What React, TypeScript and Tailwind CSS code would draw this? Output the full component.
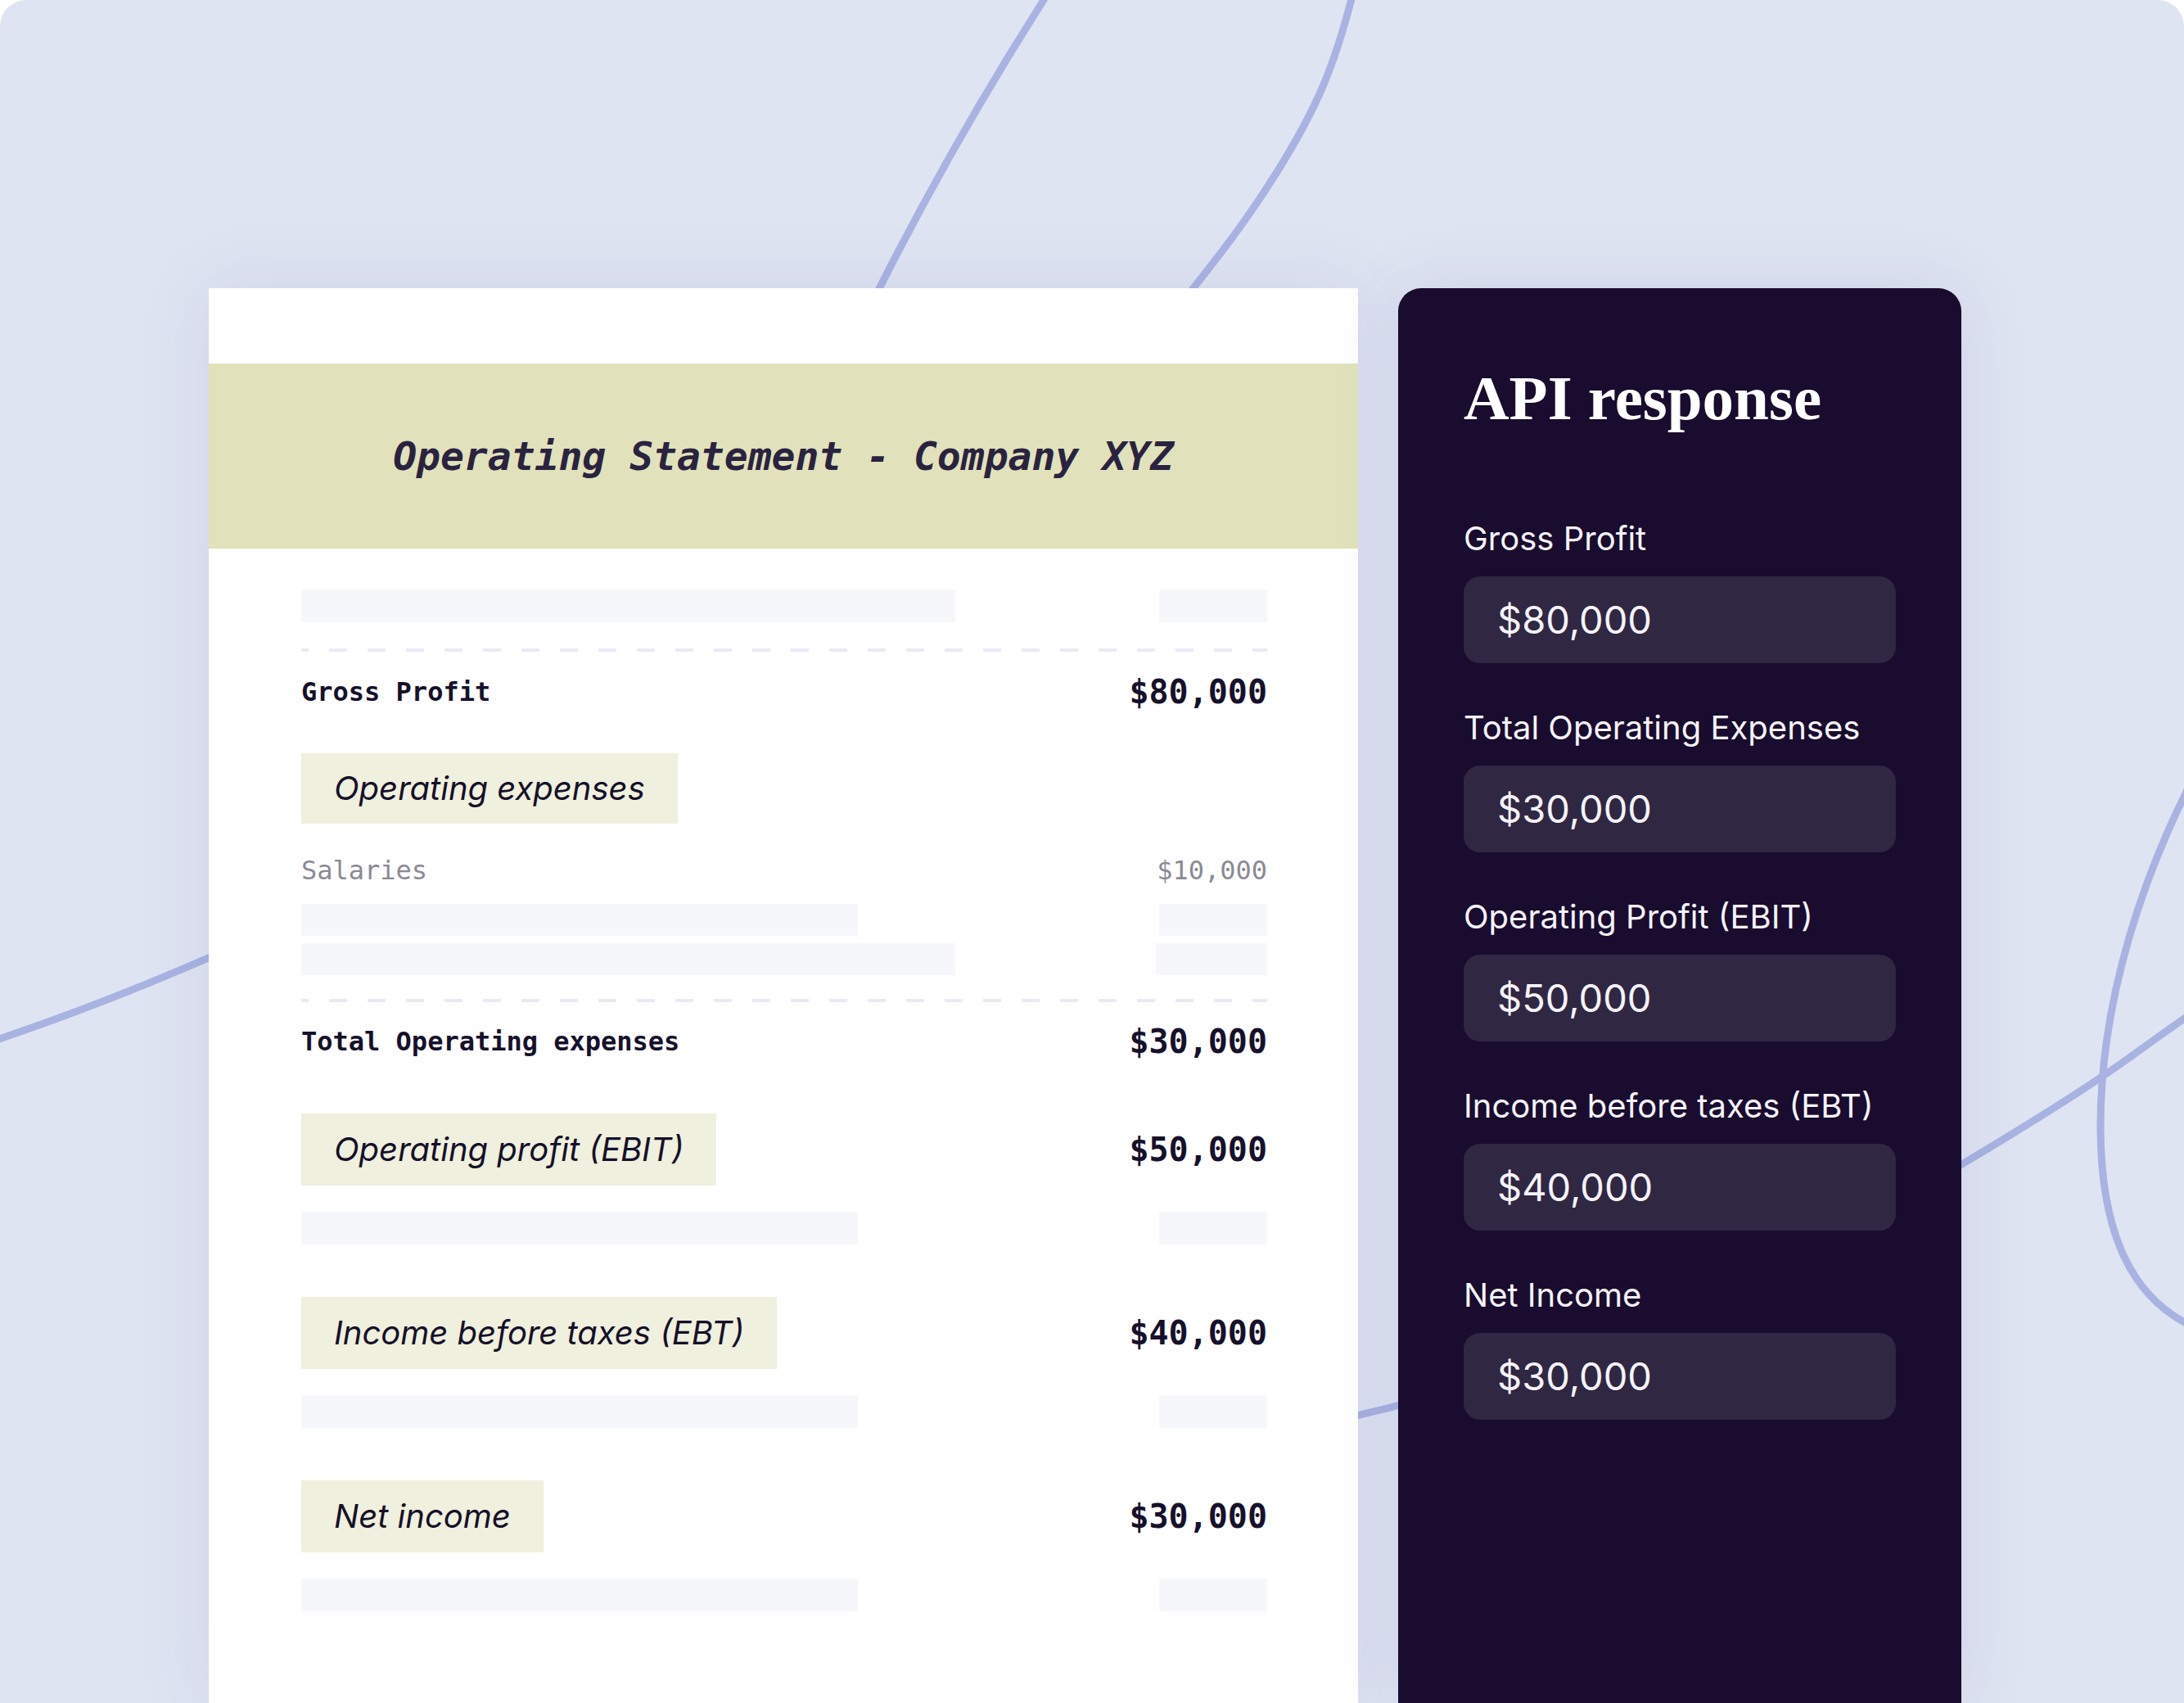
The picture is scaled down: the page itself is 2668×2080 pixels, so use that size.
import React from 'react';

const MONO = "font-['DejaVu_Sans_Mono',monospace]";
const SANS = "font-['Inter',sans-serif]";

const API_FIELDS = [
  { label: 'Gross Profit', value: '$80,000' },
  { label: 'Total Operating Expenses', value: '$30,000' },
  { label: 'Operating Profit (EBIT)', value: '$50,000' },
  { label: 'Income before taxes (EBT)', value: '$40,000' },
  { label: 'Net Income', value: '$30,000' },
];

function Placeholder({ left, right, className = '' }: { left: string; right: string; className?: string }) {
  return (
    <div className={`flex justify-between h-[40px] ${className}`}>
      <div className={`h-full bg-[#f6f7fb] ${left}`} />
      <div className={`h-full bg-[#f6f7fb] ${right}`} />
    </div>
  );
}

function Dashed({ className = '' }: { className?: string }) {
  return (
    <div
      className={`h-[4px] bg-[repeating-linear-gradient(to_right,#eaeaf6_0_9px,transparent_9px_34px,#eaeaf6_34px_47px)] ${className}`}
    />
  );
}

function TotalRow({ label, value, className = '' }: { label: string; value: string; className?: string }) {
  return (
    <div className={`flex items-center justify-between h-[50px] text-[#16112b] ${MONO} ${className}`}>
      <span className="text-[32px] font-bold">{label}</span>
      <span className="text-[40px] font-bold">{value}</span>
    </div>
  );
}

function Chip({ children }: { children: React.ReactNode }) {
  return (
    <div className={`h-full flex items-center px-[40px] bg-[#eff0dd] text-[40px] italic text-[#16102a] ${SANS}`}>
      {children}
    </div>
  );
}

function ChipRow({ label, value, className = '' }: { label: string; value?: string; className?: string }) {
  return (
    <div className={`flex items-center justify-between h-[88px] ${className}`}>
      <Chip>{label}</Chip>
      {value && <span className={`text-[40px] font-bold text-[#16112b] ${MONO}`}>{value}</span>}
    </div>
  );
}

function Statement() {
  return (
    <div className="relative z-10 w-[1404px] shrink-0 bg-white pt-[92px] shadow-[0_0_80px_rgba(70,80,160,0.10)]">
      {/* Title band */}
      <div className="h-[226px] bg-[#e1e2bb] flex items-center justify-center">
        <h1 className={`text-[48px] font-bold italic text-[#2a2340] ${MONO}`}>
          Operating Statement - Company XYZ
        </h1>
      </div>

      <div className="pl-[113px] pr-[111px] flex flex-col">
        <Placeholder left="w-[799px]" right="w-[132px]" className="mt-[50px]" />
        <Dashed className="mt-[32px]" />
        <TotalRow label="Gross Profit" value="$80,000" className="mt-[24px]" />

        <div className="mt-[50px] h-[86px] flex">
          <Chip>Operating expenses</Chip>
        </div>

        <div className={`mt-[37px] h-[40px] flex items-center justify-between text-[32px] text-[#8b8a94] ${MONO}`}>
          <span>Salaries</span>
          <span>$10,000</span>
        </div>

        <Placeholder left="w-[680px]" right="w-[132px]" className="mt-[21px] !h-[39px]" />
        <Placeholder left="w-[799px]" right="w-[136px]" className="mt-[9px] !h-[39px]" />
        <Dashed className="mt-[29px]" />
        <TotalRow label="Total Operating expenses" value="$30,000" className="mt-[23px]" />

        <ChipRow label="Operating profit (EBIT)" value="$50,000" className="mt-[63px]" />
        <Placeholder left="w-[680px]" right="w-[132px]" className="mt-[32px]" />

        <ChipRow label="Income before taxes (EBT)" value="$40,000" className="mt-[64px]" />
        <Placeholder left="w-[680px]" right="w-[132px]" className="mt-[32px]" />

        <ChipRow label="Net income" value="$30,000" className="mt-[64px]" />
        <Placeholder left="w-[680px]" right="w-[132px]" className="mt-[32px]" />
      </div>
    </div>
  );
}

function ApiPanel() {
  return (
    <div className="relative z-10 w-[688px] shrink-0 bg-[#190c2e] rounded-t-[28px] px-[80px] pt-[96px] shadow-[0_0_80px_rgba(70,80,160,0.12)]">
      <h2 className="text-[77px] leading-none font-bold text-white font-['Liberation_Serif',serif]">API response</h2>
      <div className="mt-[109px] flex flex-col gap-[55px]">
        {API_FIELDS.map((f) => (
          <div key={f.label} className={`flex flex-col gap-[22px] ${SANS}`}>
            <span className="text-[40px] leading-[48px] text-[#f4f3f8]">{f.label}</span>
            <div className="h-[106px] rounded-[20px] bg-[#302743] flex items-center pl-[41px] text-[47px] text-[#f4f3f8]">
              {f.value}
            </div>
          </div>
        ))}
      </div>
    </div>
  );
}

function Curves() {
  return (
    <svg
      className="absolute inset-0 w-full h-full"
      viewBox="0 0 2668 2080"
      fill="none"
      stroke="#a9b3e2"
      strokeWidth={9}
      strokeLinecap="round"
    >
      <path d="M1275 0 Q1160 180 1060 380" />
      <path d="M300 1150 Q140 1222 -10 1272" />
      <path d="M1652 -5 C1630 80 1610 130 1560 210 S1470 335 1420 400" />
      <path d="M1620 1737 C1900 1680 2200 1540 2400 1420 S2600 1290 2680 1236" />
      <path d="M2690 930 C2620 1060 2565 1220 2566 1380 C2567 1500 2600 1590 2690 1625" />
    </svg>
  );
}

export default function App() {
  return (
    <div className="w-[2668px] h-[2080px] bg-white overflow-hidden">
      <div className="relative w-full h-full bg-[#dfe4f2] rounded-t-[32px] overflow-hidden">
        <Curves />
        <div className="relative flex items-stretch gap-[49px] pl-[255px] pt-[352px] h-full">
          <Statement />
          <ApiPanel />
        </div>
      </div>
    </div>
  );
}
